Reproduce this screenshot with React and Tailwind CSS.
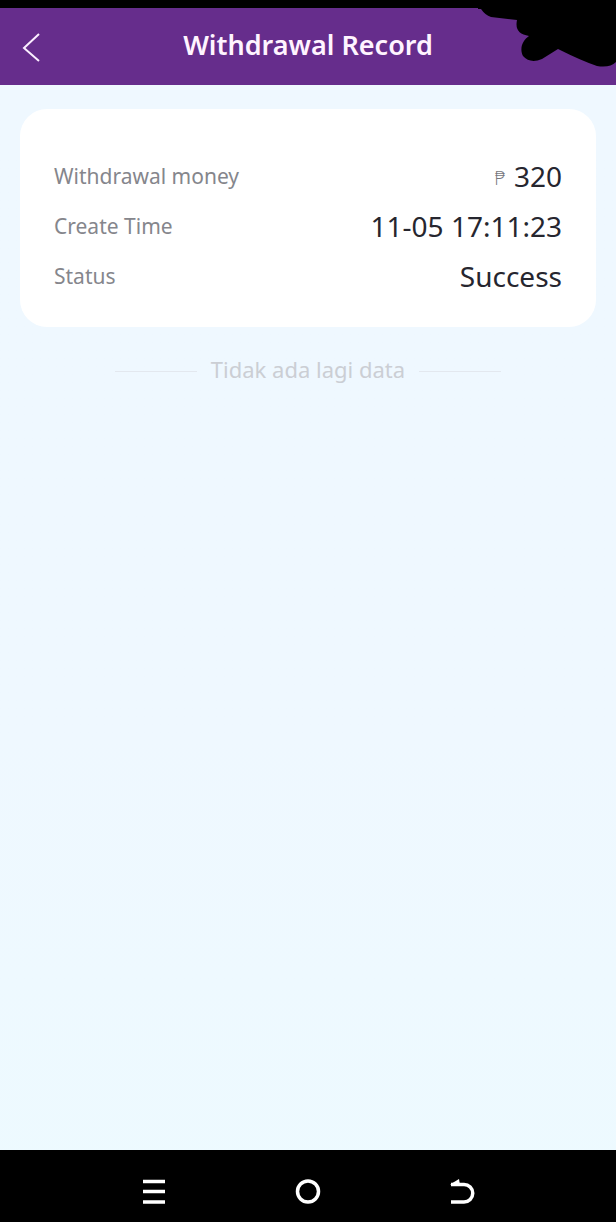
import React from 'react';

const record = [
  { label: 'Withdrawal money', value: '320', currency: '₱' },
  { label: 'Create Time', value: '11-05 17:11:23' },
  { label: 'Status', value: 'Success' },
];

function Header({ title }) {
  return (
    <header className="relative border-t-8 border-black bg-[#662d8c] text-white">
      <div className="grid h-[77px] grid-cols-[64px_1fr_64px] items-center">
        <button type="button" aria-label="Back" className="flex h-full items-center pl-5">
          <svg width="24" height="32" viewBox="0 0 24 32" fill="none" stroke="#fbeeff" strokeWidth="2">
            <path d="M19 3 4 17l15 13" />
          </svg>
        </button>
        <h1 className="pb-1 text-center text-[27px] leading-8 font-semibold text-[#fff4ff]">{title}</h1>
      </div>

      {/* Ink over the status area */}
      <svg
        className="absolute -top-2 right-0"
        width="138"
        height="72"
        viewBox="0 0 138 72"
        aria-hidden="true"
      >
        <path
          d="M0 0H138V62Q132 68 119 66Q104 61 80 49L64 59Q52 64 45 56C41 48 45 40 51 36Q36 34 39 20L13 17Q7 15 3 9H0Z"
          fill="#000"
        />
      </svg>
    </header>
  );
}

function RecordCard({ rows }) {
  return (
    <dl className="rounded-[27px] bg-white px-[34px] pt-[42px] pb-[26px]">
      {rows.map((row) => (
        <div key={row.label} className="flex h-[50px] items-center justify-between">
          <dt className="text-[21px] leading-7 text-[#85868c]">{row.label}</dt>
          <dd className="flex items-center gap-2 text-[28px] leading-8 text-[#26262f]">
            {row.currency && (
              <span className="pt-1 font-['DejaVu_Sans',sans-serif] text-[19px] leading-6 font-extralight text-[#77777d]">
                {row.currency}
              </span>
            )}
            {row.value}
          </dd>
        </div>
      ))}
    </dl>
  );
}

function EndOfList({ children }) {
  return (
    <div className="mt-7 flex items-center justify-center gap-[14px]">
      <span className="h-px w-[82px] bg-[#e3e8ef]" />
      <p className="pb-1 text-[22px] leading-7 text-[#cbced4]">{children}</p>
      <span className="h-px w-[82px] bg-[#e3e8ef]" />
    </div>
  );
}

function SystemNav() {
  return (
    <nav className="grid h-[72px] grid-cols-3 items-center bg-black px-[12.5%] pt-3 text-white">
      <button type="button" aria-label="Recent apps" className="flex justify-center">
        <svg width="26" height="26" viewBox="0 0 26 26" stroke="currentColor" strokeWidth="3.5">
          <path d="M2 2.5h22M2 12.5h22M2 23h22" />
        </svg>
      </button>
      <button type="button" aria-label="Home" className="flex justify-center">
        <svg width="26" height="26" viewBox="0 0 26 26" fill="none" stroke="currentColor" strokeWidth="3.5">
          <circle cx="13" cy="12.5" r="10.5" />
        </svg>
      </button>
      <button type="button" aria-label="Back" className="flex justify-center">
        <svg width="26" height="26" viewBox="0 0 26 26" fill="none" stroke="currentColor" strokeWidth="3.5">
          <path d="M2 5.5h13a8.7 8.7 0 0 1 0 17.5H2" />
          <path d="M1 5.5 10 0 11 6Z" fill="currentColor" stroke="none" />
        </svg>
      </button>
    </nav>
  );
}

export default function App() {
  return (
    <div className="flex min-h-screen flex-col bg-linear-to-b from-[#eff8ff] from-60% to-[#edfaff] font-['Noto_Sans','Open_Sans',sans-serif]">
      <Header title="Withdrawal Record" />
      <main className="flex-1 px-5 pt-6">
        <RecordCard rows={record} />
        <EndOfList>Tidak ada lagi data</EndOfList>
      </main>
      <SystemNav />
    </div>
  );
}
